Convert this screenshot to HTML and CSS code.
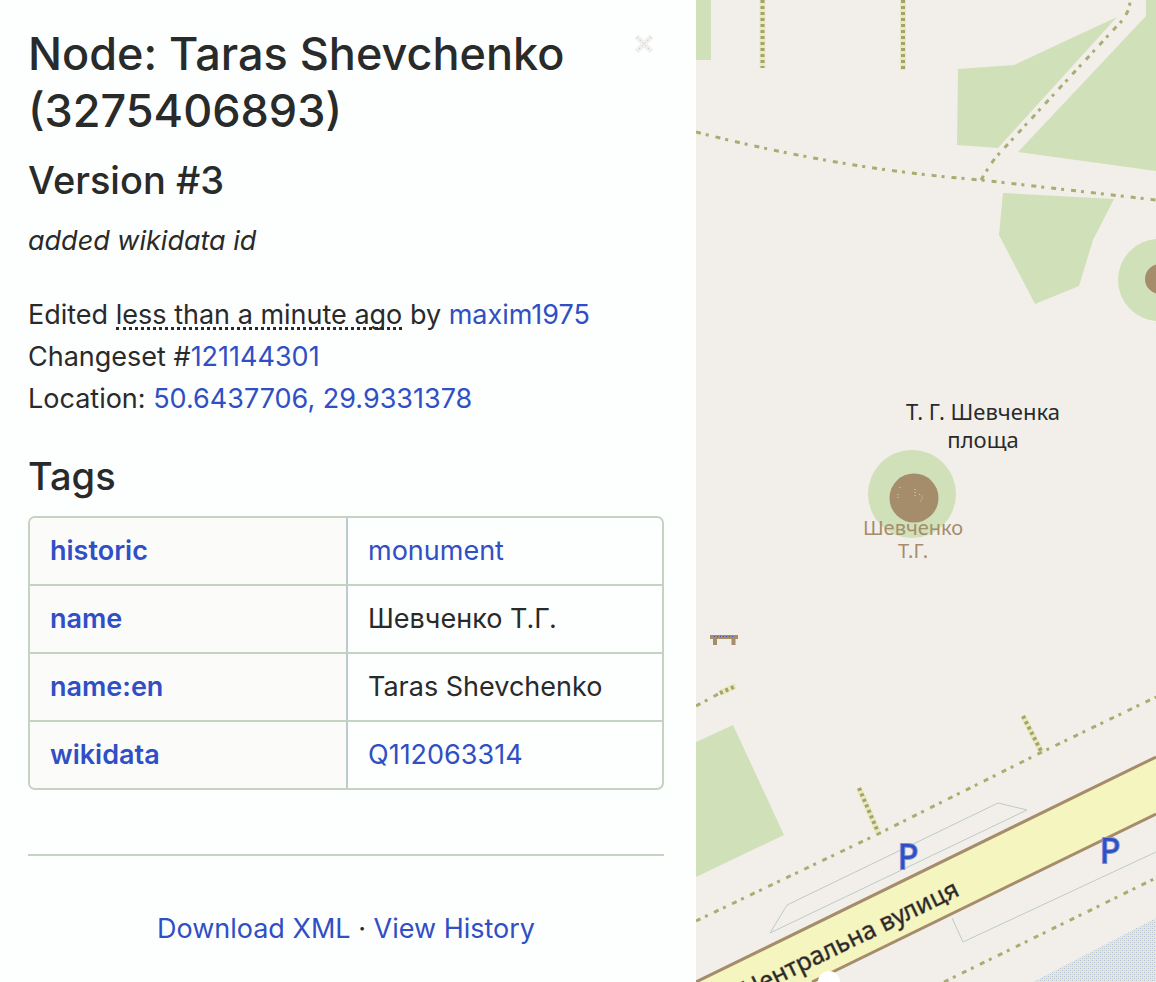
FILE: index.html
```html
<!DOCTYPE html>
<html lang="en">
<head>
<meta charset="utf-8">
<title>Node: Taras Shevchenko (3275406893)</title>
<link rel="stylesheet" href="styles.css">
</head>
<body>
<div class="page">
  <main class="sidebar">
    <header class="heading">
      <h1 class="title">Node: Taras Shevchenko (3275406893)</h1>
      <button class="close" type="button" aria-label="Close">
        <svg viewBox="0 0 20 20" width="20" height="20" aria-hidden="true">
          <path d="M2.500 2.500L17.500 17.500M17.500 2.500L2.500 17.500"/>
          <path class="close-fleck" d="M3 3L17 17M17 3L3 17"/>
        </svg>
      </button>
    </header>
    <h2 class="subtitle">Version #3</h2>
    <p class="comment">added wikidata id</p>
    <div class="details">
      <div>Edited <abbr class="time" title="less than a minute ago">less than a minute ago</abbr> by <a href="#user">maxim1975</a></div>
      <div>Changeset #<a href="#changeset">121144301</a></div>
      <div>Location: <a href="#location">50.6437706, 29.9331378</a></div>
    </div>
    <h2 class="subtitle">Tags</h2>
    <table class="tags">
      <tbody>
        <tr><th scope="row"><a href="#historic">historic</a></th><td><a href="#monument">monument</a></td></tr>
        <tr><th scope="row"><a href="#name">name</a></th><td>Шевченко Т.Г.</td></tr>
        <tr><th scope="row"><a href="#name-en">name:en</a></th><td>Taras Shevchenko</td></tr>
        <tr><th scope="row"><a href="#wikidata">wikidata</a></th><td><a href="#q">Q112063314</a></td></tr>
      </tbody>
    </table>
    <footer class="actions">
      <a href="#xml">Download XML</a> · <a href="#history">View History</a>
    </footer>
  </main>
  <section class="map" aria-label="Map">
    <svg class="map-canvas" viewBox="0 0 460 982" preserveAspectRatio="xMinYMin slice">
      <defs>
        <pattern id="dots" width="4" height="4" patternUnits="userSpaceOnUse">
          <rect width="4" height="4" fill="#e6e6e6"/>
          <path d="M0 0h1v1h-1zM2 2h1v1h-1z" fill="#b4bee0"/>
          <path d="M2 0h1v1h-1zM0 2h1v1h-1z" fill="#d0d8c4"/>
        </pattern>
      </defs>
      <g class="grass">
        <path d="M0 0H15V60H0z"/>
        <path d="M262 69L318 65L421 17L302 148L261 145z"/>
        <path d="M450 0H460V171L322 152L450 16z"/>
        <path d="M307 193L418 199L397 240L383 286L339 304L303 235z"/>
        <circle cx="463" cy="280" r="41"/>
        <path d="M0 742L37 725L88 835L0 877z"/>
        <circle cx="216" cy="494" r="44"/>
      </g>
      <circle class="monument" cx="464" cy="279" r="15"/>
      <circle class="monument" cx="218" cy="498" r="24.500"/>
      <path d="M204 487v3M202 494v6M219 489v9M223 494l4 3-3 5" class="fleck"/>
      <g class="path-glow">
        <path d="M66.500 0V68M207 0V70M24 693L40 686M163 788L182 832M327 716L346 753"/>
      </g>
      <g class="steps">
        <path d="M66.500 0V68M207 0V70M24 693L40 686M163 788L182 832M327 716L346 753"/>
      </g>
      <g class="path">
        <path d="M0 132Q70 150 140 162T285 180L460 200"/>
        <path d="M285 180Q292 168 300 157L420 27Q434 14 434 0"/>
        <path d="M0 706L24 693"/>
        <path d="M0 921L182 834L346 752L460 697"/>
        <path d="M248 982L460 878"/>
      </g>
      <path d="M337 982L460 918V982z" fill="url(#dots)"/>
      <g class="parking">
        <path d="M74 933L91 905L302 803L331 810z"/>
        <path d="M256 918L267 942L460 852"/>
      </g>
      <g class="road">
        <path d="M0 982L460 757V814L130 975L116 982z" class="road-fill"/>
        <path d="M0 982L460 757M116 982L460 814"/>
      </g>
      <circle cx="133" cy="982" r="11" fill="#fff"/>
      <path class="bench" d="M14 635H42V639H39.500V645H35.500V639H21V645H17V639H14z"/>
      <path d="M18 636.500H38" class="bench-line"/>
      <text class="street" transform="translate(51 999) rotate(-26)">Центральна вулиця</text>
      <text class="place" x="287" y="420">Т. Г. Шевченка</text>
      <text class="place" x="287" y="448">площа</text>
      <text class="poi" x="217" y="535">Шевченко</text>
      <text class="poi" x="217" y="558">Т.Г.</text>
      <text class="p" x="212" y="869">P</text>
      <text class="p" x="414" y="863">P</text>
    </svg>
  </section>
</div>
</body>
</html>
```
FILE: styles.css
```css
* { box-sizing: border-box; }
body {
  margin: 0;
  background: #fdfefe;
  color: #292a2a;
  font: 27px/42px Inter, "Noto Sans", sans-serif;
}
a { color: #304fc4; text-decoration: none; }
.page {
  display: grid;
  grid-template-columns: minmax(0, 696fr) minmax(0, 460fr);
  min-height: 100vh;
}
.sidebar { padding: 25px 32px 28px 28px; }
.heading {
  display: flex;
  justify-content: space-between;
  align-items: flex-start;
  margin-bottom: 17px;
}
.title, .subtitle { margin: 0; font-weight: 500; }
.title { font-size: 45px; line-height: 57px; }
.subtitle { font-size: 38px; line-height: 48px; margin-bottom: 16px; }
.close {
  display: block;
  flex: none;
  margin: 9px 10px 0 0;
  padding: 0;
  border: 0;
  background: none;
  line-height: 0;
}
.close path { stroke: #f2efeb; stroke-width: 5; fill: none; }
.close .close-fleck { stroke: #b5bfe0; stroke-width: 1; stroke-dasharray: 1 3; }
.comment { margin: 0 0 32px; font-style: italic; }
.details { margin-bottom: 32px; }
.time {
  text-decoration: none;
  border-bottom: 3px dotted #292a2a;
  display: inline-block;
  line-height: 24px;
}
.tags {
  width: 100%;
  table-layout: fixed;
  border: 2px solid #c5d3c0;
  border-radius: 7px;
  border-spacing: 0;
  margin-bottom: 64px;
  overflow: hidden;
}
.tags th, .tags td {
  padding: 12px 20px;
  text-align: left;
  font-weight: 400;
}
.tags th { font-weight: 600; background: #fbfbfa; }
.tags td { border-left: 2px solid #bccbd2; }
.tags tr + tr th, .tags tr + tr td { border-top: 2px solid #c5d3c0; }
.actions {
  border-top: 2px solid #c5d3c0;
  padding-top: 52px;
  text-align: center;
}
.map { position: relative; background: #f2efeb; overflow: hidden; }
.map-canvas { position: absolute; inset: 0; width: 100%; height: 100%; }
.grass { fill: #d0e0b8; }
.monument { fill: #a58c6b; }
.fleck { stroke: #d0e0b8; stroke-dasharray: 1 2; fill: none; }
.path-glow { stroke: #e6ebbc; stroke-width: 6; fill: none; }
.steps { stroke: #a8a070; stroke-width: 4; stroke-dasharray: 3 3; fill: none; }
.path { stroke: #a9ad70; stroke-width: 3; stroke-dasharray: 5 5 3 7; fill: none; }
.parking { stroke: #bccbc8; stroke-width: 1; fill: none; }
.road { stroke: #a58c6b; stroke-width: 3; fill: none; }
.road .road-fill { fill: #f5f5c0; stroke: none; }
.bench { fill: #a58c6b; }
.bench-line { stroke: #304fc4; stroke-dasharray: 1 2; }
.map text { font-family: "Noto Sans", sans-serif; }
.map .place { font-size: 22px; text-anchor: middle; fill: #292a2a; }
.map .poi { font-size: 20px; text-anchor: middle; fill: #a58c6b; }
.map .street { font-size: 25px; fill: #292a2a; stroke: #c0b089; stroke-width: 1; paint-order: stroke; }
.map .p { font-size: 34px; text-anchor: middle; fill: #304fc4; stroke: #7f92d8; stroke-width: 2; paint-order: stroke; }
```
